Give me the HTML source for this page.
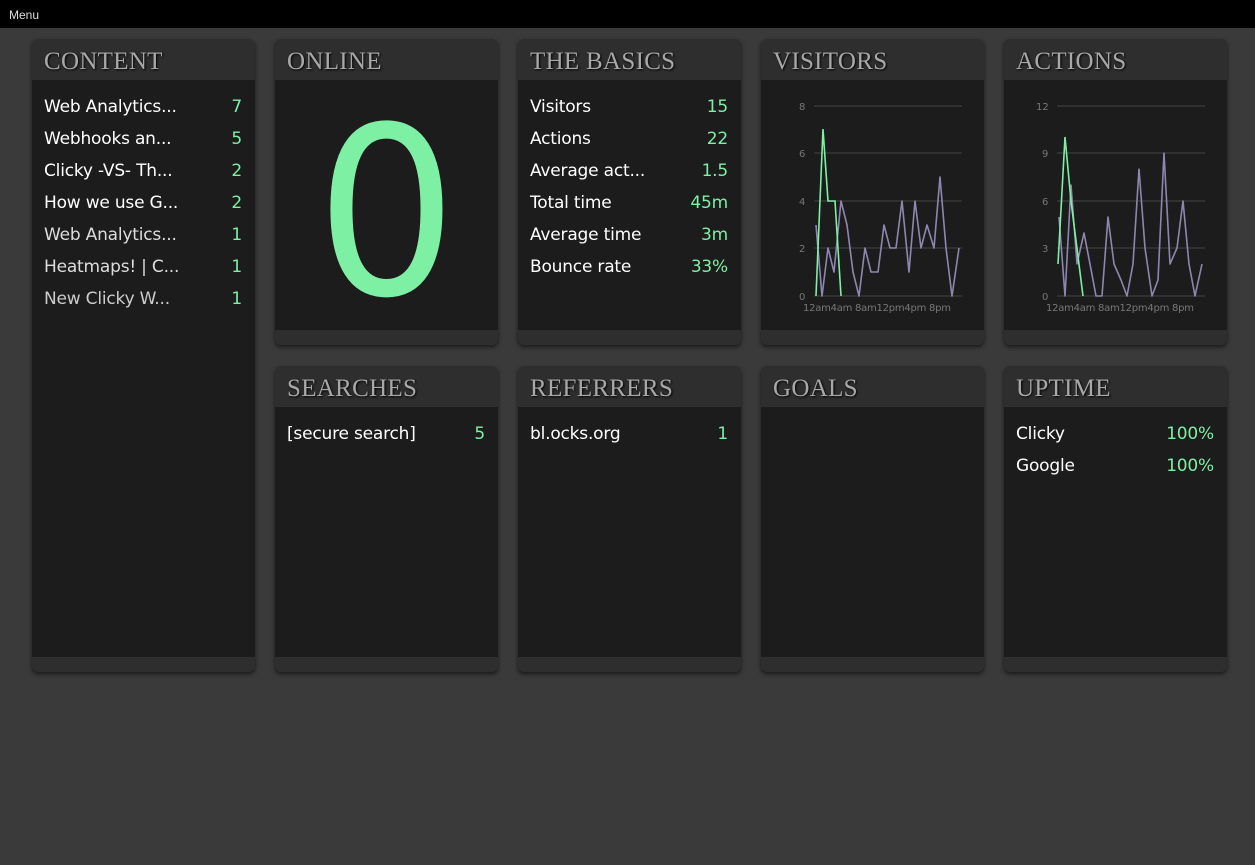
<!DOCTYPE html><html><head><style>
body{margin:0;width:1255px;height:865px;background:#3a3a3a;font-family:"DejaVu Sans","Liberation Sans",sans-serif;overflow:hidden;position:relative}
.bar{position:absolute;left:0;top:0;width:1255px;height:28px;background:#000;color:#ddd;font-size:12px}
.bar span{position:absolute;left:9px;top:8px;font-family:"Liberation Sans",sans-serif}
.p{position:absolute;width:223px;background:#2e2e2e;border-radius:6px;box-shadow:0 2px 4px rgba(0,0,0,.6)}
.h{height:41px;color:#a8a8a8;font-family:"Liberation Serif",serif;font-size:25px;padding-left:12px;line-height:46px;text-shadow:1px 1px 2px #000;letter-spacing:.3px}
.b{background:#1c1c1c;position:relative}
.r{position:absolute;left:12px;right:13px;color:#fff;font-size:17px;white-space:nowrap;letter-spacing:-0.2px}
.r i{font-style:normal;position:absolute;right:0;color:#7ef0a4}
svg text{font-family:"DejaVu Sans",sans-serif;font-size:10px;fill:#777}
</style></head><body>
<div class="bar"><span>Menu</span></div>

<div class="p" style="left:32px;top:39px;height:633px"><div class="h">CONTENT</div><div class="b" style="height:577px">
<div class="r" style="top:17px">Web Analytics...<i>7</i></div>
<div class="r" style="top:49px">Webhooks an...<i>5</i></div>
<div class="r" style="top:81px">Clicky -VS- Th...<i>2</i></div>
<div class="r" style="top:113px">How we use G...<i>2</i></div>
<div class="r" style="top:145px;color:#ddd">Web Analytics...<i>1</i></div>
<div class="r" style="top:177px;color:#ddd">Heatmaps! | C...<i>1</i></div>
<div class="r" style="top:209px;color:#ccc">New Clicky W...<i>1</i></div>
</div></div>

<div class="p" style="left:275px;top:39px;height:306px"><div class="h">ONLINE</div><div class="b" style="height:250px">
<div style="position:absolute;left:0;right:0;top:14px;text-align:center;color:#7ef0a4;font-size:234px;line-height:240px;font-family:'DejaVu Sans',sans-serif;transform:scaleX(0.95)">0</div></div></div>

<div class="p" style="left:518px;top:39px;height:306px"><div class="h">THE BASICS</div><div class="b" style="height:250px">
<div class="r" style="top:17px">Visitors<i>15</i></div>
<div class="r" style="top:49px">Actions<i>22</i></div>
<div class="r" style="top:81px">Average act...<i>1.5</i></div>
<div class="r" style="top:113px">Total time<i>45m</i></div>
<div class="r" style="top:145px">Average time<i>3m</i></div>
<div class="r" style="top:177px">Bounce rate<i>33%</i></div>
</div></div>

<div class="p" style="left:761px;top:39px;height:306px"><div class="h">VISITORS</div><div class="b" style="height:250px">
<svg width="223" height="250" style="position:absolute;left:0;top:0">
<g stroke="#444" stroke-width="1"><line x1="53" y1="26" x2="201" y2="26"/><line x1="53" y1="73" x2="201" y2="73"/><line x1="53" y1="121" x2="201" y2="121"/><line x1="53" y1="168" x2="201" y2="168"/><line x1="53" y1="216" x2="201" y2="216"/></g>
<text x="38" y="30">8</text><text x="38" y="77">6</text><text x="38" y="125">4</text><text x="38" y="172">2</text><text x="38" y="220">0</text>
<text x="42" y="231" textLength="148">12am4am 8am12pm4pm 8pm</text>
<polyline fill="none" stroke="#8f86b0" stroke-width="1.6" stroke-linejoin="round" points="55,145 61,216 67,168 73,192 80,121 86,145 92,192 98,216 104,168 110,192 117,192 123,145 129,168 135,168 141,121 148,192 154,121 160,168 166,145 173,168 179,97 185,168 191,216 198,168"/>
<polyline fill="none" stroke="#7ef0a4" stroke-width="1.6" points="55,216 62,49 67,121 74,121 80,216"/>
</svg></div></div>

<div class="p" style="left:1004px;top:39px;height:306px"><div class="h">ACTIONS</div><div class="b" style="height:250px">
<svg width="223" height="250" style="position:absolute;left:0;top:0">
<g stroke="#444" stroke-width="1"><line x1="53" y1="26" x2="201" y2="26"/><line x1="53" y1="73" x2="201" y2="73"/><line x1="53" y1="121" x2="201" y2="121"/><line x1="53" y1="168" x2="201" y2="168"/><line x1="53" y1="216" x2="201" y2="216"/></g>
<text x="32" y="30">12</text><text x="38" y="77">9</text><text x="38" y="125">6</text><text x="38" y="172">3</text><text x="38" y="220">0</text>
<text x="42" y="231" textLength="148">12am4am 8am12pm4pm 8pm</text>
<polyline fill="none" stroke="#8f86b0" stroke-width="1.6" stroke-linejoin="round" points="55,137 61,216 67,105 73,184 80,153 86,184 92,216 98,216 104,137 110,184 117,200 123,216 129,184 135,89 141,168 148,216 154,200 160,73 166,184 173,168 179,121 185,184 191,216 198,184"/>
<polyline fill="none" stroke="#7ef0a4" stroke-width="1.6" points="54,184 61,57 67,121 79,216"/>
</svg></div></div>

<div class="p" style="left:275px;top:366px;height:306px"><div class="h">SEARCHES</div><div class="b" style="height:250px">
<div class="r" style="top:17px">[secure search]<i>5</i></div></div></div>
<div class="p" style="left:518px;top:366px;height:306px"><div class="h">REFERRERS</div><div class="b" style="height:250px">
<div class="r" style="top:17px">bl.ocks.org<i>1</i></div></div></div>
<div class="p" style="left:761px;top:366px;height:306px"><div class="h">GOALS</div><div class="b" style="height:250px"></div></div>
<div class="p" style="left:1004px;top:366px;height:306px"><div class="h">UPTIME</div><div class="b" style="height:250px">
<div class="r" style="top:17px">Clicky<i>100%</i></div>
<div class="r" style="top:49px">Google<i>100%</i></div></div></div>
</body></html>
